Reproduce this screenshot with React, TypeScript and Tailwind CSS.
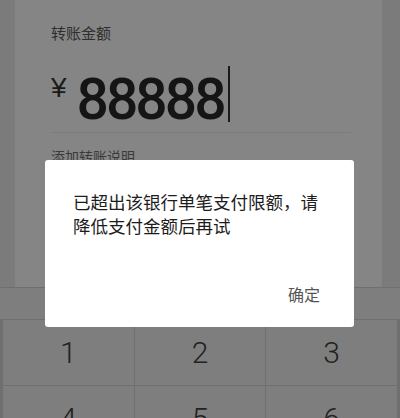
const KEYS = ["1", "2", "3", "4", "5", "6"];

const cjk = "font-['Noto_Sans_CJK_SC','Noto_Sans',sans-serif]";

function AmountCard() {
  return (
    <div className="flex h-[287px]">
      <div className="w-[15px] shrink-0 bg-[#7b7b7b]" />
      <div className="flex w-[367px] flex-col bg-[#858585] pl-[36px]">
        <div className={`${cjk} mt-[24px] text-[15px] leading-[18px] text-[#2e2e2e]`}>转账金额</div>

        <div className="mt-[24px] flex h-[56px] items-start">
          <span className="mt-[8px] font-['Liberation_Sans',sans-serif] text-[28px] leading-none text-[#1a1a1a]">¥</span>
          <span className="ml-[10px] mt-[5px] font-['Roboto',sans-serif] text-[57px] font-medium leading-none tracking-[-3px] text-[#151515]">
            88888
          </span>
          <span className="ml-[4px] h-[56px] w-[2px] bg-[#1a1a1a]" />
        </div>

        <div className="mt-[10px] h-px w-[300px] bg-[#7c7c7c]" />

        <div className={`${cjk} mt-[14px] text-[14px] leading-[18px] text-[#3a3a3a]`}>添加转账说明</div>
      </div>
      <div className="flex-1 bg-[#7b7b7b]" />
    </div>
  );
}

function Keypad() {
  return (
    <div className="border-t border-[#6f6f6f] bg-[#7e7e7e]">
      <div className="h-[32px] border-b border-[#6f6f6f]" />
      <div className="grid grid-cols-3 gap-px bg-[#6f6f6f] px-[3px]">
        {KEYS.map((k) => (
          <div
            key={k}
            className="flex h-[65px] items-center justify-center bg-[#7e7e7e] font-['Roboto',sans-serif] text-[30px] font-light text-[#222]"
          >
            {k}
          </div>
        ))}
      </div>
    </div>
  );
}

export default function App() {
  return (
    <div className="relative h-[418px] w-[400px] overflow-hidden bg-[#7b7b7b]">
      <AmountCard />
      <Keypad />

      {/* limit alert */}
      <div className="absolute left-[45px] top-[160px] flex h-[167px] w-[309px] flex-col justify-between rounded-[3px] bg-white">
        <p className={`${cjk} px-[28px] pt-[30px] text-[17.5px] leading-[24px] text-[#1c1c1c]`}>
          已超出该银行单笔支付限额，请降低支付金额后再试
        </p>
        <div className="flex justify-end pb-[23px] pr-[34px]">
          <span className={`${cjk} text-[16px] leading-[20px] text-[#555]`}>确定</span>
        </div>
      </div>
    </div>
  );
}
